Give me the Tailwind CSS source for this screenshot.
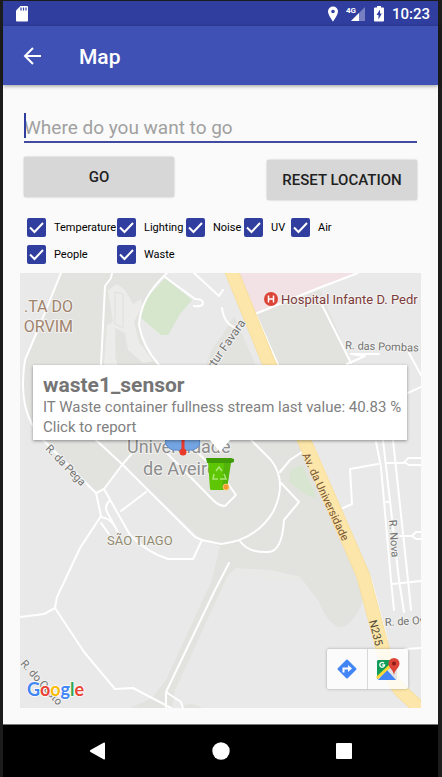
<!DOCTYPE html>
<html lang="en">
<head>
<meta charset="utf-8">
<meta name="viewport" content="width=device-width, initial-scale=1">
<title>Map</title>
<script src="https://cdn.jsdelivr.net/npm/@tailwindcss/browser@4"></script>
</head>
<body class="min-h-screen bg-[#1c1c1c] font-['Roboto',sans-serif]">
<div class="flex min-h-screen flex-col border-x-4 border-l-3 border-t border-[#1c1c1c] bg-[#fafafa]">
  <!-- Status bar -->
  <div class="flex h-[25px] shrink-0 items-center bg-[#303f9f] pr-2 pl-[13px] text-white">
    <svg class="h-4 w-3" viewBox="0 0 12 16" role="img" aria-label="SD card"><path fill="#fff" d="M4.500 0H11a1 1 0 0 1 1 1v13.500a1 1 0 0 1-1 1H1a1 1 0 0 1-1-1V4.500z"/><path stroke="#303f9f" stroke-width="1.200" d="M5 1.500v3M7.500 1.500v3M10 1.500v3"/></svg>
    <div class="ml-auto flex items-center">
      <svg class="mr-2 h-4 w-[10px]" viewBox="0 0 10 16" role="img" aria-label="Location"><path fill="#fff" fill-rule="evenodd" d="M5 .5a5 5 0 0 0-5 5C0 9 5 15.500 5 15.500S10 9 10 5.500a5 5 0 0 0-5-5zm0 3.200a1.800 1.800 0 1 1 0 3.600 1.800 1.800 0 0 1 0-3.600z"/></svg>
      <svg class="mr-2 h-4 w-5" viewBox="0 0 20 16" role="img" aria-label="Signal"><path fill="#7780c0" d="M19 1v14H5z"/><path fill="#fff" d="M13 7v8H5z"/><text x="0" y="7" font-size="8" font-weight="700" fill="#fff">4G</text></svg>
      <svg class="mr-2 h-4 w-[10px]" viewBox="0 0 10 16" role="img" aria-label="Battery charging"><path fill="#fff" d="M3 0h4v1.500h2a1 1 0 0 1 1 1v12a1 1 0 0 1-1 1H1a1 1 0 0 1-1-1v-12a1 1 0 0 1 1-1h2z"/><path fill="#303f9f" d="M6 3.500 2.500 9H4.500v4.500L7.800 7.600H6z"/></svg>
      <span class="text-[15px] leading-5 font-medium">10:23</span>
    </div>
  </div>
  <!-- App bar -->
  <header class="z-10 flex h-[59px] shrink-0 items-center bg-[#3f51b5] px-5 text-white shadow-[0_1px_4px_rgba(0,0,0,0.4)]">
    <button type="button" aria-label="Back" class="flex w-14 items-center"><svg class="h-5 w-5" viewBox="0 0 20 20" fill="none" stroke="#fff" stroke-width="2"><path d="M18 10H2.500M10 2 2 10l8 8"/></svg></button>
    <h1 class="pt-[2px] text-[21px] leading-6 font-medium">Map</h1>
  </header>

  <main class="flex flex-1 flex-col pr-[17px] pb-4 pl-[17px]">
    <div class="relative mx-1 mt-5 border-b-2 border-[#404a9f]">
      <label for="dest" class="sr-only">Destination</label>
      <input id="dest" type="text" placeholder="Where do you want to go" class="block h-9 w-full bg-transparent pt-2 text-[19px] leading-7 outline-none placeholder:text-[#a0a0a0]">
      <span class="absolute top-2 left-0 h-[25px] w-[2px] bg-[#303f9f]"></span>
    </div>
    <div class="mx-1 mt-[14px] flex items-start justify-between">
      <button type="button" class="h-10 w-[150px] rounded-xs bg-[#d7d7d7] text-[15px] leading-5 font-medium text-[#212121] shadow-[0_0_2px_rgba(0,0,0,0.3)]">GO</button>
      <button type="button" class="mt-[3px] h-10 w-[150px] rounded-xs bg-[#d7d7d7] text-[15px] leading-5 font-medium text-[#212121] shadow-[0_0_2px_rgba(0,0,0,0.3)]">RESET LOCATION</button>
    </div>
    <div class="mt-[18px] grid grid-cols-[90px_69px_58px_47px_1fr] gap-y-2 pl-[7px] text-[11px] leading-4 text-black">
      <label class="flex h-[19px] items-center gap-2"><span class="grid h-[19px] w-[19px] shrink-0"><input type="checkbox" checked class="peer col-start-1 row-start-1 appearance-none rounded-xs border-2 border-[#303f9f] checked:bg-[#303f9f]"><svg class="pointer-events-none invisible col-start-1 row-start-1 peer-checked:visible" viewBox="0 0 19 19" fill="none" stroke="#fff" stroke-width="2"><path d="m3 9.500 4.500 4.500L16 5"/></svg></span>Temperature</label>
      <label class="flex h-[19px] items-center gap-2"><span class="grid h-[19px] w-[19px] shrink-0"><input type="checkbox" checked class="peer col-start-1 row-start-1 appearance-none rounded-xs border-2 border-[#303f9f] checked:bg-[#303f9f]"><svg class="pointer-events-none invisible col-start-1 row-start-1 peer-checked:visible" viewBox="0 0 19 19" fill="none" stroke="#fff" stroke-width="2"><path d="m3 9.500 4.500 4.500L16 5"/></svg></span>Lighting</label>
      <label class="flex h-[19px] items-center gap-2"><span class="grid h-[19px] w-[19px] shrink-0"><input type="checkbox" checked class="peer col-start-1 row-start-1 appearance-none rounded-xs border-2 border-[#303f9f] checked:bg-[#303f9f]"><svg class="pointer-events-none invisible col-start-1 row-start-1 peer-checked:visible" viewBox="0 0 19 19" fill="none" stroke="#fff" stroke-width="2"><path d="m3 9.500 4.500 4.500L16 5"/></svg></span>Noise</label>
      <label class="flex h-[19px] items-center gap-2"><span class="grid h-[19px] w-[19px] shrink-0"><input type="checkbox" checked class="peer col-start-1 row-start-1 appearance-none rounded-xs border-2 border-[#303f9f] checked:bg-[#303f9f]"><svg class="pointer-events-none invisible col-start-1 row-start-1 peer-checked:visible" viewBox="0 0 19 19" fill="none" stroke="#fff" stroke-width="2"><path d="m3 9.500 4.500 4.500L16 5"/></svg></span>UV</label>
      <label class="flex h-[19px] items-center gap-2"><span class="grid h-[19px] w-[19px] shrink-0"><input type="checkbox" checked class="peer col-start-1 row-start-1 appearance-none rounded-xs border-2 border-[#303f9f] checked:bg-[#303f9f]"><svg class="pointer-events-none invisible col-start-1 row-start-1 peer-checked:visible" viewBox="0 0 19 19" fill="none" stroke="#fff" stroke-width="2"><path d="m3 9.500 4.500 4.500L16 5"/></svg></span>Air</label>
      <label class="flex h-[19px] items-center gap-2"><span class="grid h-[19px] w-[19px] shrink-0"><input type="checkbox" checked class="peer col-start-1 row-start-1 appearance-none rounded-xs border-2 border-[#303f9f] checked:bg-[#303f9f]"><svg class="pointer-events-none invisible col-start-1 row-start-1 peer-checked:visible" viewBox="0 0 19 19" fill="none" stroke="#fff" stroke-width="2"><path d="m3 9.500 4.500 4.500L16 5"/></svg></span>People</label>
      <label class="flex h-[19px] items-center gap-2"><span class="grid h-[19px] w-[19px] shrink-0"><input type="checkbox" checked class="peer col-start-1 row-start-1 appearance-none rounded-xs border-2 border-[#303f9f] checked:bg-[#303f9f]"><svg class="pointer-events-none invisible col-start-1 row-start-1 peer-checked:visible" viewBox="0 0 19 19" fill="none" stroke="#fff" stroke-width="2"><path d="m3 9.500 4.500 4.500L16 5"/></svg></span>Waste</label>
    </div>

    <!-- Map -->
    <section aria-label="Map" class="relative mt-[9px] flex-1 overflow-hidden bg-[#e9e9e9]">
      <svg class="block h-full w-full" viewBox="20 273 401 435" preserveAspectRatio="xMidYMid slice" font-family="Roboto, sans-serif">
        <rect x="0" y="0" width="900" height="1200" fill="#e9e9e9"/>
        <g fill="#e2e3df">
          <path d="M61 273H167Q140 300 139 325Q145 350 158 365L250 365L304 440L363 575L362 603Q352 627 340 627Q328 625 318 600L300 577L236 568L228 575L175 690L172 708H130L152 698L166 680L212 580L220 546L202 540L123 465L104 489L96 493L33 425Q15 395 25 360L42 320z"/>
          <path d="M257 314 320 290 351 363 345 370H278z"/>
          <path d="M180 708q10-8 22 0z"/>
        </g>
        <path fill="#ececea" d="M108 290l9-6 8 6 8 14 8-5 1 7-8 16 5 20 14 19-10 2-15-13-3-17-10-5 2 37h-13l3-40 6-3z"/>
        <path fill="none" stroke="#e0e1de" d="M115 292v32l8 4v-34zM116 335v25l7-2v-22"/>
        <path fill="#e9e9e9" d="M168 273h54l36 85-12 7h-88q-32-35-10-65z"/>
        <path fill="#e2e3df" d="M222 336q-12 12-16 30h50l-22-50z"/>
        <path fill="#d5e6cd" d="M165 278 192 300 180 314 168 335 161 335 141 318 146 299z"/>
        <path fill="#d8e5d1" d="m290 470 12-5 12 25 2 8-10-3-17-13z"/>
        <path fill="#f2e2e5" d="M235 273H355L316 289 255 314z"/>
        <path fill="#e9e9e7" d="m235 568 36 2 30 7-10 3-60-4z"/>
        <g fill="none" stroke="#fff" stroke-width="2" stroke-linejoin="round" stroke-linecap="round">
          <path d="M61 273 42 320 25 360Q21 385 25 405T45 442L96 493 101 516 80 548 65 580 57 597 55 608 44 614 20 617"/>
          <path d="m55 608 29 44 31 37 18-1 38 20"/>
          <path d="m96 493 8-4 18-24 12-14"/>
          <path d="m96 440 27 25 72 72 7 3 19 4q35-4 52-32 15-30-2-52l-22-22"/>
          <path d="m202 540-9 19h-25q-20-6-38-24L104 489M146 492l-25 19M110 500q-6 6-3 12l11 20M101 517q8 1 13 8l4 7M101 523l8 11"/>
          <path d="m163 449 50 51q6 6 12 6l11-11-12-17-30-29"/>
          <path d="m280 472 10-12 12-8 8-10M281 483l18 19-15 18q-2 32-16 32-20 1-28-11"/>
          <path d="m256 315 22 50 33 76 60 139 16 60M255 314l61-25 42-16M322 305l29 58M347 364l18-8-14-2 28 0M409 353l12 22M408 393l13-6"/>
          <path d="m376 442 5 25 10 113 3 30M383 440l16 140 5 32M393 440l15 140 3 30M387 463h17l4-5h13M404 462l5 3h12M400 536h12l4-4h5M412 536l4 3h5M343 508l9-4-2-35 28-5M386 502h4M392 584l29-3M405 649l16-1"/>
          <path d="M167 273Q140 298 139 325q4 22 20 40M165 277l30 22q8 0 8 4t-9 3M194 273l25 23 4-6M112 273l-1 5-6 8-4 79M222 308q2 16 14 20"/>
          <path d="m229 563-14 27-49 102v16M166 692l15 10 2 6"/>
        </g>
        <path fill="none" stroke="#f7dfa0" stroke-width="14" d="M229 265 268 361 304 440 363 575 383 650Q390 680 402 692L424 712"/>
        <path fill="none" stroke="#fde6a9" stroke-width="12" d="M229 265 268 361 304 440 363 575 383 650Q390 680 402 692L424 712"/>
        <g stroke="#f2f2f0" stroke-width="2" paint-order="stroke" stroke-linejoin="round">
          <g fill="#a0836d" font-size="16" text-anchor="end"><text x="73" y="312">.TA DO</text><text x="73" y="332">ORVIM</text></g>
          <text x="281" y="304" font-size="13" fill="#7d3b3b">Hospital Infante D. Pedr</text>
          <g fill="#737373" font-size="11">
            <text transform="translate(345 349) rotate(2)">R. das Pombas</text>
            <text transform="translate(213 370) rotate(-55)" font-size="12">rtur Favara</text>
            <text transform="translate(45 449) rotate(46)">R. da Pega</text>
            <text transform="translate(389 520) rotate(86)">R. Nova</text>
            <text transform="translate(385 626) rotate(-3)">R. de Ov</text>
            <text transform="translate(20 664) rotate(48)">R. do Custo</text>
          </g>
          <g fill="#8d8d8d" font-size="18"><text x="127" y="453">Universidade</text><text x="143" y="475">de Aveiro</text></g>
          <text x="107" y="545" font-size="13" fill="#918a70">SÃO TIAGO</text>
        </g>
        <text transform="translate(302 455) rotate(65)" font-size="11" fill="#7c5736">Av. da Universidade</text>
        <text transform="translate(369 621) rotate(76)" font-size="11" fill="#4f4636">N235</text>
        <circle cx="271" cy="299" r="7" fill="#db4437"/><path d="M268.500 295.500v7M273.500 295.500v7M268.500 299h5" stroke="#fff" stroke-width="1.500"/>
        <!-- Weather station marker -->
        <path fill="#74a5e2" stroke="#5c8acb" d="M166 438h33q2 7-2 10-4 3-9 2l-5 1-6-1q-5 1-8-2-5-3-3-10z"/>
        <path stroke="#e8392b" stroke-width="3" d="M183 438v15"/><circle cx="183" cy="452" r="3.500" fill="#e8392b"/>
        <!-- Waste container marker -->
        <path fill="#5fc606" d="m208 462 22 0-3 27q0 1-2 1h-13q-2 0-2-1z"/><path fill="#3f9c08" d="M206 458h25l3 1v3l-3 1h-24z"/><path fill="#53b409" d="M224 463h7l-4 26h-5z"/>
        <path d="m216 471 3-4 3 4M214 474l-1 5h5M224 474l2 5h-6" fill="none" stroke="#a9e873" stroke-width="1.500"/>
        <circle cx="226" cy="487" r="3" fill="#f39b32" stroke="#f8c76b"/>
        <g font-family="Lato, sans-serif" font-size="18" font-weight="700" stroke="#fff" stroke-width="1.500" paint-order="stroke"><text x="27" y="696"><tspan fill="#4285f4">G</tspan><tspan fill="#ea4335">o</tspan><tspan fill="#fbbc05">o</tspan><tspan fill="#4285f4">g</tspan><tspan fill="#34a853">l</tspan><tspan fill="#ea4335">e</tspan></text></g>
      </svg>
      <div class="absolute top-[92px] right-[14px] left-[13px]">
        <div class="bg-white px-[10px] pt-2 pb-[3px] text-[#808080] shadow-[0_1px_3px_rgba(0,0,0,0.4)]">
          <h2 class="text-[21px] leading-6 font-bold text-[#757575]">waste1_sensor</h2>
          <p class="text-[15px] leading-5 whitespace-nowrap">IT Waste container fullness stream last value: 40.83 %</p>
          <p class="text-[15px] leading-5">Click to report</p>
        </div>
        <svg class="mx-auto h-3 w-6" viewBox="0 0 24 12"><path fill="#fff" d="M2 0h20L12 12z"/></svg>
      </div>
      <div class="absolute right-[13px] bottom-[19px] flex h-10 rounded-xs bg-white/80 shadow-[0_0_3px_rgba(0,0,0,0.3)]">
        <button type="button" aria-label="Directions" class="grid w-10 place-items-center"><svg class="h-5 w-5" viewBox="0 0 20 20"><rect x="3" y="3" width="14" height="14" rx="1" transform="rotate(45 10 10)" fill="#4285f4"/><path fill="none" stroke="#fff" stroke-width="2" d="M6.500 13.500V9.500h5"/><path fill="#fff" d="m11 6 4 3.500-4 3.500z"/></svg></button>
        <button type="button" aria-label="Open in Google Maps" class="grid w-[41px] place-items-center border-l border-[#d8d8d8]"><svg class="h-6 w-6" viewBox="0 0 24 24"><rect x="1" y="3" width="20" height="20" rx="1" fill="#e4e4e4"/><path fill="#0f9d58" d="M2 3h15v5L1 22V4z"/><path fill="#4285f4" d="m11 13 9 10H2z"/><path stroke="#fdd835" stroke-width="3" d="M1 21 15 8"/><path fill="#db4437" d="M18 1a5.500 5.500 0 0 0-5.500 5.500C12.500 11 17 12 18 18c1-6 5.500-7 5.500-11.500A5.500 5.500 0 0 0 18 1z"/><circle cx="18" cy="6.500" r="2" fill="#8c1d18"/><path d="M8 6.200A2.400 2.400 0 1 0 8.600 8H6.200" fill="none" stroke="#fff" stroke-width="1.300"/></svg></button>
      </div>
    </section>
  </main>

  <!-- System navigation -->
  <nav aria-label="System" class="grid h-[53px] shrink-0 grid-cols-[1fr_49px_1fr] items-center border-t border-[#777] bg-black px-[70px]">
    <button type="button" aria-label="Back" class="ml-4 justify-self-start"><svg class="h-[18px] w-4" viewBox="0 0 16 18"><path fill="#fff" d="M14.500.8Q16 .2 16 1.500v15q0 1.300-1.500.7L1.500 10q-1.500-1 0-2z"/></svg></button>
    <button type="button" aria-label="Home" class="justify-self-center"><svg class="h-[18px] w-[18px]" viewBox="0 0 18 18"><circle cx="9" cy="9" r="8.700" fill="#fff"/></svg></button>
    <button type="button" aria-label="Recent apps" class="mr-4 justify-self-end"><svg class="h-4 w-4" viewBox="0 0 16 16"><rect width="16" height="16" rx="1" fill="#fff"/></svg></button>
  </nav>
</div>
</body>
</html>
